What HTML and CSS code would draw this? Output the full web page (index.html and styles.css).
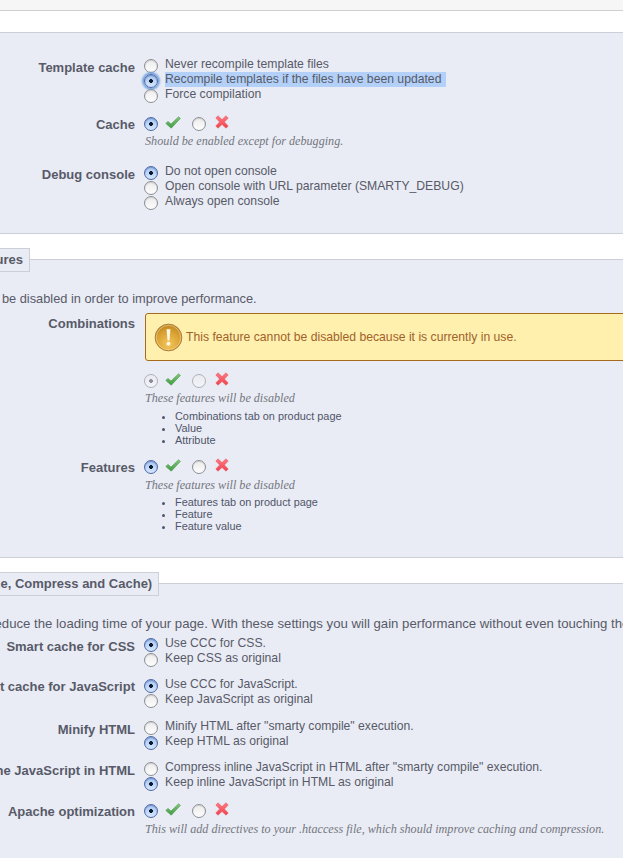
FILE: index.html
```html
<!DOCTYPE html>
<html lang="en">
<head>
<meta charset="utf-8">
<title>Performance</title>
<link rel="stylesheet" href="styles.css">
</head>
<body>
<svg class="defs" width="0" height="0" aria-hidden="true">
  <defs>
    <linearGradient id="gt" x1="0" y1="0" x2="0" y2="1"><stop offset="0" stop-color="#84c977"/><stop offset="1" stop-color="#3f9a45"/></linearGradient>
    <linearGradient id="gx" x1="0" y1="0" x2="0" y2="1"><stop offset="0" stop-color="#ff7b84"/><stop offset="1" stop-color="#f0424c"/></linearGradient>
    <symbol id="tick" viewBox="0 0 16 13"><path d="M.8 7.4 3 5.4 6 8 13.6.8 15.4 2.4 6.2 12.2z" fill="url(#gt)" stroke="#4a9a4c" stroke-width=".6" stroke-linejoin="round"/></symbol>
    <symbol id="cross" viewBox="0 0 14 14"><path d="M.8 3 3 .8 7 4.6 11 .8 13.2 3 9.4 7 13.2 11 11 13.2 7 9.4 3 13.2.8 11 4.6 7z" fill="url(#gx)" stroke="#e4525b" stroke-width=".5" stroke-linejoin="round"/></symbol>
  </defs>
</svg>
<main class="page">
  <div class="strip"></div>
  <div class="gap gap-first"></div>

  <section class="panel panel-smarty">
    <div class="row row-template">
      <div class="label label-template">Template cache</div>
      <div class="options">
        <div class="opt"><span class="radio"></span><span class="opt-text">Never recompile template files</span></div>
        <div class="opt"><span class="radio on focus"></span><span class="opt-text selected">Recompile templates if the files have been updated</span></div>
        <div class="opt"><span class="radio"></span><span class="opt-text">Force compilation</span></div>
      </div>
    </div>
    <div class="row row-cache">
      <div class="label label-switch">Cache</div>
      <div>
        <div class="switch">
          <span class="radio on"></span><svg class="tick"><use href="#tick"/></svg>
          <span class="radio second"></span><svg class="cross"><use href="#cross"/></svg>
        </div>
        <p class="note note-tight">Should be enabled except for debugging.</p>
      </div>
    </div>
    <div class="row row-debug">
      <div class="label label-options">Debug console</div>
      <div class="options">
        <div class="opt"><span class="radio on"></span><span class="opt-text">Do not open console</span></div>
        <div class="opt"><span class="radio"></span><span class="opt-text">Open console with URL parameter (SMARTY_DEBUG)</span></div>
        <div class="opt"><span class="radio"></span><span class="opt-text">Always open console</span></div>
      </div>
    </div>
  </section>

  <div class="gap"></div>

  <section class="panel panel-features">
    <div class="legend legend-features">Optional features</div>
    <p class="intro intro-features">Some features can be disabled in order to improve performance.</p>
    <div class="row row-combinations">
      <div class="label label-combo">Combinations</div>
      <div>
        <div class="warn">
          <svg class="warn-icon" viewBox="0 0 30 30" aria-hidden="true">
            <defs>
              <radialGradient id="wg" cx=".5" cy=".75" r=".75"><stop offset="0" stop-color="#f4c65c"/><stop offset=".6" stop-color="#dba234"/><stop offset="1" stop-color="#bd8420"/></radialGradient>
            </defs>
            <circle cx="15" cy="15" r="13.8" fill="url(#wg)" stroke="#a8793a" stroke-width="1"/>
            <circle cx="15" cy="15" r="12.6" fill="none" stroke="#f7dfa2" stroke-width=".8" opacity=".7"/>
            <path d="M13 6.5h4l-1 11.5h-2z" fill="#fff8e4"/>
            <circle cx="15" cy="21.5" r="2" fill="#fff8e4"/>
          </svg>
          <span class="warn-text">This feature cannot be disabled because it is currently in use.</span>
        </div>
        <div class="switch switch-disabled">
          <span class="radio on"></span><svg class="tick"><use href="#tick"/></svg>
          <span class="radio second"></span><svg class="cross"><use href="#cross"/></svg>
        </div>
        <p class="note note-mid">These features will be disabled</p>
        <ul class="list">
          <li>Combinations tab on product page</li>
          <li>Value</li>
          <li>Attribute</li>
        </ul>
      </div>
    </div>
    <div class="row row-features">
      <div class="label label-switch">Features</div>
      <div>
        <div class="switch">
          <span class="radio on"></span><svg class="tick"><use href="#tick"/></svg>
          <span class="radio second"></span><svg class="cross"><use href="#cross"/></svg>
        </div>
        <p class="note">These features will be disabled</p>
        <ul class="list list-tight">
          <li>Features tab on product page</li>
          <li>Feature</li>
          <li>Feature value</li>
        </ul>
      </div>
    </div>
  </section>

  <div class="gap"></div>

  <section class="panel panel-ccc">
    <div class="legend legend-ccc">CCC (Combine, Compress and Cache)</div>
    <p class="intro intro-ccc">CCC allows you to reduce the loading time of your page. With these settings you will gain performance without even touching the code of your theme.</p>
    <div class="row row-css">
      <div class="label label-options">Smart cache for CSS</div>
      <div class="options">
        <div class="opt"><span class="radio on"></span><span class="opt-text">Use CCC for CSS.</span></div>
        <div class="opt"><span class="radio"></span><span class="opt-text">Keep CSS as original</span></div>
      </div>
    </div>
    <div class="row row-ccc">
      <div class="label label-js">Smart cache for JavaScript</div>
      <div class="options">
        <div class="opt"><span class="radio on"></span><span class="opt-text">Use CCC for JavaScript.</span></div>
        <div class="opt"><span class="radio"></span><span class="opt-text">Keep JavaScript as original</span></div>
      </div>
    </div>
    <div class="row row-minify">
      <div class="label label-options">Minify HTML</div>
      <div class="options">
        <div class="opt"><span class="radio"></span><span class="opt-text">Minify HTML after "smarty compile" execution.</span></div>
        <div class="opt"><span class="radio on"></span><span class="opt-text">Keep HTML as original</span></div>
      </div>
    </div>
    <div class="row row-ccc">
      <div class="label label-options">Compress inline JavaScript in HTML</div>
      <div class="options">
        <div class="opt"><span class="radio"></span><span class="opt-text">Compress inline JavaScript in HTML after "smarty compile" execution.</span></div>
        <div class="opt"><span class="radio on"></span><span class="opt-text">Keep inline JavaScript in HTML as original</span></div>
      </div>
    </div>
    <div class="row row-apache">
      <div class="label label-switch">Apache optimization</div>
      <div>
        <div class="switch">
          <span class="radio on"></span><svg class="tick"><use href="#tick"/></svg>
          <span class="radio second"></span><svg class="cross"><use href="#cross"/></svg>
        </div>
        <p class="note">This will add directives to your .htaccess file, which should improve caching and compression.</p>
      </div>
    </div>
  </section>
</main>
</body>
</html>
```
FILE: styles.css
```css
* { box-sizing: border-box; }
html, body { margin: 0; padding: 0; }
body {
  width: 623px;
  height: 858px;
  overflow: hidden;
  background: #fff;
  font-family: "Liberation Sans", Arial, sans-serif;
  font-size: 12px;
  color: #585a69;
}
.defs { display: block; height: 0; }
.page { width: 623px; height: 858px; overflow: hidden; }
.strip { height: 11px; background: #f6f6f6; border-bottom: 1px solid #cfcfd2; }
.gap { height: 25px; background: #fff; }
.gap-first { height: 21px; }

.panel {
  background: #e9ecf4;
  border-top: 1px solid #ccced8;
  border-bottom: 1px solid #ccced8;
}
.panel-smarty { height: 202px; padding-top: 26px; }
.panel-features { height: 299px; }
.panel-ccc { height: 275px; border-bottom: 0; }

.legend {
  display: block;
  width: max-content;
  height: 24px;
  margin-top: -12px;
  padding: 0 6px;
  line-height: 22px;
  font-weight: bold;
  font-size: 13px;
  white-space: nowrap;
  background: #e9ecf4;
  border: 1px solid #ccced8;
}
.legend-features { margin-left: -91px; }
.legend-ccc { margin-left: -91px; }

.intro { margin: 0; white-space: nowrap; line-height: 15px; }
.intro-features { font-size: 12.8px; margin-top: 19px; margin-left: -109px; }
.intro-ccc { font-size: 13.2px; margin-top: 20px; margin-left: -122px; }

.row { display: grid; grid-template-columns: 135px 1fr; column-gap: 9px; }
.row-cache { margin-top: 13px; }
.row-debug { margin-top: 18px; }
.row-combinations { margin-top: 7px; }
.row-features { margin-top: 14px; }
.row-css { margin-top: 7px; }
.row-ccc { margin-top: 11px; }
.row-minify { margin-top: 12px; }
.row-apache { margin-top: 12px; }

.label {
  display: flex;
  justify-content: flex-end;
  font-weight: bold;
  font-size: 13px;
  line-height: 16px;
  white-space: nowrap;
}
.label-template { padding-top: 1px; }
.label-options { padding-top: 1px; }
.label-js { padding-top: 0; }
.label-switch { padding-top: 0; }
.label-combo { padding-top: 3px; }

.options { display: flex; flex-direction: column; }
.opt { display: flex; height: 15px; gap: 7px; align-items: flex-start; }
.opt-text { line-height: 15px; white-space: nowrap; font-size: 12.2px; margin-top: -2px; }
.selected { background: #b3d1f8; padding-right: 5px; height: 15px; }

.radio {
  display: block;
  flex: none;
  width: 14px;
  height: 14px;
  border-radius: 50%;
  border: 1px solid #8d8f96;
  background: linear-gradient(#ececec, #fdfdfd);
  box-shadow: inset 0 1px 1px #d0d0d0;
}
.radio.on {
  border-color: #4e69a8;
  background: radial-gradient(circle at 50% 50%, #0b1a33 0 1.6px, transparent 2.2px), linear-gradient(#a9c6f0, #d5e6fb);
  box-shadow: inset 0 1px 1px #6f90c8;
}
.radio.focus { box-shadow: 0 0 2px 2px #76a5e2, inset 0 1px 1px #6f90c8; }

.switch { display: flex; align-items: flex-start; height: 15px; }
.second { margin-left: 11px; }
.tick { width: 16px; height: 13px; margin-left: 7px; margin-top: -1px; }
.cross { width: 14px; height: 14px; margin-left: 9px; margin-top: -2px; }

.switch-disabled { margin-top: 13px; }
.switch-disabled .radio { border-color: #b0b1b8; background: radial-gradient(circle at 50% 50%, #8d8f9a 0 1.6px, transparent 2.2px), linear-gradient(#e9ebf2, #f3f4f8); box-shadow: none; }
.switch-disabled .radio.second { background: linear-gradient(#e9ebf2, #f3f4f8); }

.note {
  margin: 3px 0 0 1px;
  font-family: "Liberation Serif", Georgia, serif;
  font-style: italic;
  font-size: 12.15px;
  line-height: 14px;
  color: #74767f;
  white-space: nowrap;
}
.note-tight { margin-top: 2px; }
.note-mid { margin-top: 2px; }

.warn {
  display: flex;
  align-items: center;
  gap: 3px;
  width: 520px;
  height: 48px;
  margin-left: 1px;
  padding-left: 8px;
  background: #fff0ae;
  border: 1px solid #a66a1c;
  border-radius: 3px;
}
.warn-icon { width: 29px; height: 29px; flex: none; }
.warn-text { color: #a0622a; font-size: 12.2px; }

.list {
  margin: 5px 0 0;
  padding: 0 0 0 31px;
  font-size: 10.9px;
  line-height: 12px;
  color: #50546a;
}
.list-tight { margin-top: 4px; }
```
